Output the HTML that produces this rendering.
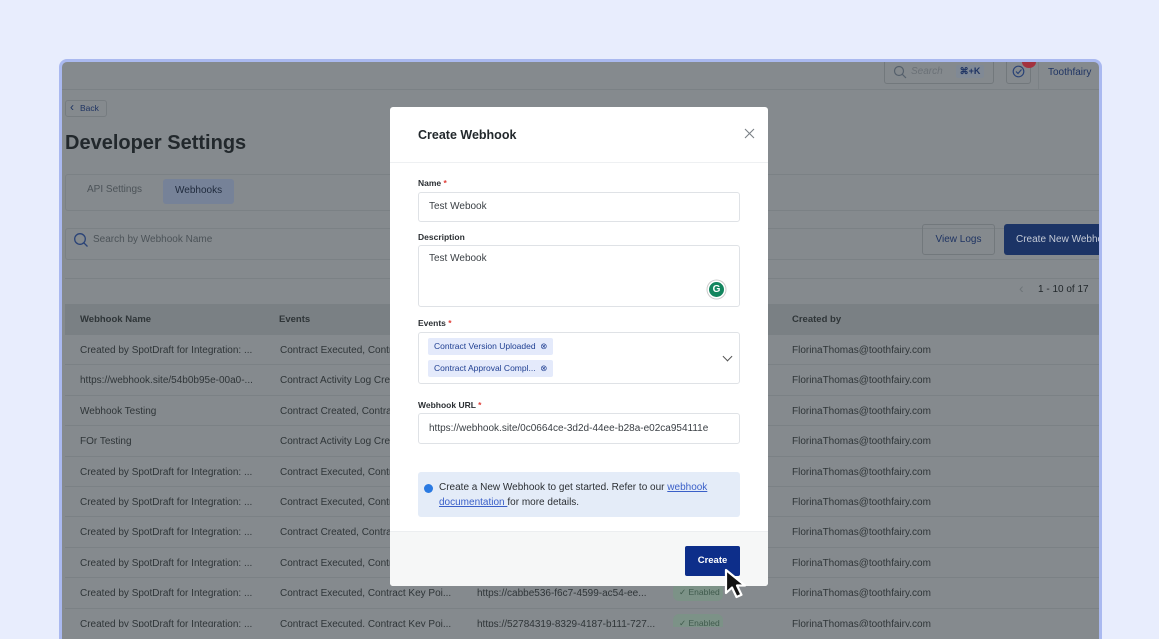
<!DOCTYPE html>
<html style="width:1159px;height:639px;overflow:hidden"><head><meta charset="utf-8"><style>
*{box-sizing:border-box;margin:0;padding:0}
body{width:1159px;height:639px;overflow:hidden;background:#e8edfd;font-family:"Liberation Sans",sans-serif;position:relative}
.a{position:absolute}
.frame{left:59px;top:59px;width:1043px;height:575px;border:3px solid #aab9f0;border-bottom:0;border-radius:8px 8px 0 0;background:#858a8e;overflow:hidden}
.t{font-size:10px;color:#2f3538;white-space:nowrap}
.m{font-size:10px;color:#2b2f33}
.lbl{font-size:8.5px;color:#2b2f33;font-weight:bold}
.star{color:#e0403a}
.inp{border:1px solid #dfe2e6;border-radius:3px;background:#fff;font-size:10px;color:#3a3f44;padding-left:10px}
.chip{background:#e4eafb;color:#1f3f92;font-size:8.5px;border-radius:2px;height:17px;line-height:17px;padding:0 6px}
.r{height:30.4px;border-bottom:1px solid #7b8185;position:relative}
.r span{top:10px}
</style></head><body>
<div class="a" style="left:59px;top:600px;width:1043px;height:39px;border-left:3px solid #aab9f0;border-right:3px solid #aab9f0;background:#858a8e"></div>
<div class="a frame">
 <div class="a" style="left:0;top:0;width:1040px;height:28px;border-bottom:1px solid #7b8185"></div>
 <div class="a" style="left:822px;top:-2px;width:110px;height:24px;border:1px solid #72787c;border-radius:3px"></div>
 <svg class="a" style="left:831px;top:3px" width="14" height="14" viewBox="0 0 14 14"><circle cx="6" cy="6" r="4.5" fill="none" stroke="#55606c" stroke-width="1.2"/><path d="M9.3 9.3 L13 13" stroke="#55606c" stroke-width="1.2"/></svg>
 <div class="a t" style="left:849px;top:4px;font-style:italic;color:#6b7177">Search</div>
 <div class="a" style="left:894px;top:3px;width:28px;height:13px;background:#808995;border-radius:2px;font-size:9px;color:#1f3463;text-align:center;line-height:13px;font-weight:bold">⌘+K</div>
 <div class="a" style="left:944px;top:-2px;width:25px;height:24px;border:1px solid #72787c;border-radius:3px"></div>
 <div class="a" style="left:960px;top:-6px;width:14px;height:12px;background:#a3323f;border-radius:50%"></div>
 <svg class="a" style="left:950px;top:3px" width="13" height="13" viewBox="0 0 13 13"><circle cx="6.5" cy="6.5" r="5.3" fill="none" stroke="#2a4377" stroke-width="1.2"/><path d="M4 6.5 L6 8.5 L9.5 4.5" fill="none" stroke="#2a4377" stroke-width="1.2"/></svg>
 <div class="a" style="left:976px;top:0;width:1px;height:28px;background:#7b8185"></div>
 <div class="a t" style="left:986px;top:5px;color:#1f3463">Toothfairy</div>

 <div class="a" style="left:3px;top:38px;width:42px;height:17px;border:1px solid #767c80;border-radius:3px;font-size:8.5px;color:#1f3463;line-height:15px;padding-left:14px">Back</div>
 <div class="a t" style="left:8px;top:38px;color:#1f3463;font-size:12px">&lsaquo;</div>
 <div class="a t" style="left:3px;top:70px;font-size:20px;font-weight:bold;color:#22282c">Developer Settings</div>
 <div class="a" style="left:3px;top:112px;width:1040px;height:37px;border:1px solid #7b8185;border-radius:3px"></div>
 <div class="a t" style="left:25px;top:122px;color:#4c5358">API Settings</div>
 <div class="a" style="left:101px;top:117px;width:71px;height:25px;background:#768298;border-radius:3px"></div>
 <div class="a t" style="left:113px;top:123px;color:#1f2a3c">Webhooks</div>
 <div class="a" style="left:3px;top:166px;width:1040px;height:32px;border:1px solid #7b8185;border-radius:3px"></div>
 <svg class="a" style="left:11px;top:170px" width="16" height="16" viewBox="0 0 16 16"><circle cx="7" cy="7" r="5.3" fill="none" stroke="#2a4377" stroke-width="1.3"/><path d="M10.8 10.8 L14.5 14.5" stroke="#2a4377" stroke-width="1.3"/></svg>
 <div class="a t" style="left:31px;top:172px;color:#4c5358">Search by Webhook Name</div>
 <div class="a" style="left:860px;top:162px;width:73px;height:31px;border:1px solid #72787c;border-radius:3px;font-size:10px;color:#1f3463;line-height:29px;text-align:center">View Logs</div>
 <div class="a" style="left:942px;top:162px;width:110px;height:31px;background:#1c3466;border-radius:3px;font-size:10px;color:#c5cbd7;line-height:31px;padding-left:12px;white-space:nowrap">Create New Webhook</div>
 <div class="a" style="left:3px;top:216px;width:1040px;height:27px;border-top:1px solid #7b8185"></div>
 <div class="a t" style="left:957px;top:218px;color:#6e7478;font-size:14px">&lsaquo;</div>
 <div class="a t" style="left:976px;top:222px;color:#22282c">1 - 10 of 17</div>
 <div class="a" style="left:3px;top:242px;width:1040px;height:31px;background:#7a8084"></div>
 <div class="a t" style="left:18px;top:252px;font-weight:bold;font-size:9.5px">Webhook Name</div>
 <div class="a t" style="left:217px;top:252px;font-weight:bold;font-size:9.5px">Events</div>
 <div class="a t" style="left:730px;top:252px;font-weight:bold;font-size:9.5px">Created by</div>
 <div class="a" style="left:3px;top:273px;width:1040px">
  <div class="r"><span class="a t" style="left:15px">Created by SpotDraft for Integration: ...</span><span class="a t" style="left:215px">Contract Executed, Contract Key Poi...</span><span class="a t" style="left:727px">FlorinaThomas@toothfairy.com</span></div>
  <div class="r"><span class="a t" style="left:15px">https://webhook.site/54b0b95e-00a0-...</span><span class="a t" style="left:215px">Contract Activity Log Created</span><span class="a t" style="left:727px">FlorinaThomas@toothfairy.com</span></div>
  <div class="r"><span class="a t" style="left:15px">Webhook Testing</span><span class="a t" style="left:215px">Contract Created, Contract</span><span class="a t" style="left:727px">FlorinaThomas@toothfairy.com</span></div>
  <div class="r"><span class="a t" style="left:15px">FOr Testing</span><span class="a t" style="left:215px">Contract Activity Log Created</span><span class="a t" style="left:727px">FlorinaThomas@toothfairy.com</span></div>
  <div class="r"><span class="a t" style="left:15px">Created by SpotDraft for Integration: ...</span><span class="a t" style="left:215px">Contract Executed, Contract</span><span class="a t" style="left:727px">FlorinaThomas@toothfairy.com</span></div>
  <div class="r"><span class="a t" style="left:15px">Created by SpotDraft for Integration: ...</span><span class="a t" style="left:215px">Contract Executed, Contract</span><span class="a t" style="left:727px">FlorinaThomas@toothfairy.com</span></div>
  <div class="r"><span class="a t" style="left:15px">Created by SpotDraft for Integration: ...</span><span class="a t" style="left:215px">Contract Created, Contract</span><span class="a t" style="left:727px">FlorinaThomas@toothfairy.com</span></div>
  <div class="r"><span class="a t" style="left:15px">Created by SpotDraft for Integration: ...</span><span class="a t" style="left:215px">Contract Executed, Contract</span><span class="a t" style="left:727px">FlorinaThomas@toothfairy.com</span></div>
  <div class="r"><span class="a t" style="left:15px">Created by SpotDraft for Integration: ...</span><span class="a t" style="left:215px">Contract Executed, Contract Key Poi...</span><span class="a t" style="left:412px">https://cabbe536-f6c7-4599-ac54-ee...</span><span class="a" style="left:608px;top:5px;width:50px;height:18px;background:#7c9287;border-radius:6px;font-size:8.5px;color:#3f5a4c;line-height:18px;padding-left:6px">&#10003; Enabled</span><span class="a t" style="left:727px">FlorinaThomas@toothfairy.com</span></div>
  <div class="r" style="border:0"><span class="a t" style="left:15px">Created by SpotDraft for Integration: ...</span><span class="a t" style="left:215px">Contract Executed, Contract Key Poi...</span><span class="a t" style="left:412px">https://52784319-8329-4187-b111-727...</span><span class="a" style="left:608px;top:5px;width:50px;height:18px;background:#7c9287;border-radius:6px;font-size:8.5px;color:#3f5a4c;line-height:18px;padding-left:6px">&#10003; Enabled</span><span class="a t" style="left:727px">FlorinaThomas@toothfairy.com</span></div>
 </div>
 <div class="a" style="left:0;top:565px;width:1040px;height:15px;background:#858a8e"></div>
</div>

<div class="a" style="left:390px;top:107px;width:378px;height:479px;background:#fff;border-radius:3px;overflow:hidden">
 <div class="a" style="left:28px;top:21px;font-size:12.5px;font-weight:bold;color:#22282c">Create Webhook</div>
 <svg class="a" style="left:354px;top:21px" width="11" height="11" viewBox="0 0 11 11"><path d="M1 1 L10 10 M10 1 L1 10" stroke="#7a8086" stroke-width="1.1"/></svg>
 <div class="a" style="left:0;top:55px;width:378px;height:1px;background:#eef0f2"></div>
 <div class="a lbl" style="left:28px;top:71px">Name <span class="star">*</span></div>
 <div class="a inp" style="left:28px;top:85px;width:322px;height:30px;line-height:28px">Test Webook</div>
 <div class="a lbl" style="left:28px;top:125px">Description</div>
 <div class="a inp" style="left:28px;top:138px;width:322px;height:62px;padding-top:7px">Test Webook</div>
 <div class="a" style="left:319px;top:175px;width:15px;height:15px;border-radius:50%;background:#13855e;color:#fff;font-size:10px;font-weight:bold;text-align:center;line-height:15px;box-shadow:0 0 0 1.5px #fff,0 0 0 2.5px #ccc">G</div>
 <div class="a lbl" style="left:28px;top:211px">Events <span class="star">*</span></div>
 <div class="a inp" style="left:28px;top:225px;width:322px;height:52px"></div>
 <div class="a chip" style="left:38px;top:231px">Contract Version Uploaded &nbsp;&#8855;</div>
 <div class="a chip" style="left:38px;top:253px">Contract Approval Compl... &nbsp;&#8855;</div>
 <div class="a" style="left:334px;top:246px;width:7px;height:7px;border-right:1px solid #555;border-bottom:1px solid #555;transform:rotate(45deg)"></div>
 <div class="a lbl" style="left:28px;top:293px">Webhook URL <span class="star">*</span></div>
 <div class="a inp" style="left:28px;top:306px;width:322px;height:31px;line-height:29px">https://webhook.site/0c0664ce-3d2d-44ee-b28a-e02ca954111e</div>
 <div class="a" style="left:28px;top:365px;width:322px;height:45px;background:#e4ecf8;border-radius:3px"></div>
 <div class="a" style="left:34px;top:377px;width:9px;height:9px;border-radius:50%;background:#2a7ae2"></div>
 <div class="a m" style="left:49px;top:373px;line-height:15px;width:300px">Create a New Webhook to get started. Refer to our <span style="color:#3a5fc8;text-decoration:underline">webhook documentation </span>for more details.</div>
 <div class="a" style="left:0;top:424px;width:378px;height:55px;background:#f6f7f7;border-top:1px solid #eceef0"></div>
 <div class="a" style="left:295px;top:439px;width:55px;height:30px;background:#0d2e8a;border-radius:2px;color:#fff;font-size:9.5px;font-weight:bold;text-align:center;line-height:30px">Create</div>
</div>
<svg class="a" style="left:722px;top:567px" width="32" height="34" viewBox="0 0 32 34"><path d="M4 3 L4 26 L10 20.5 L14.5 30 L19.5 27.8 L15 18.5 L23 18.5 Z" fill="#111" stroke="#fff" stroke-width="2.2" stroke-linejoin="round"/></svg>
</body></html>
